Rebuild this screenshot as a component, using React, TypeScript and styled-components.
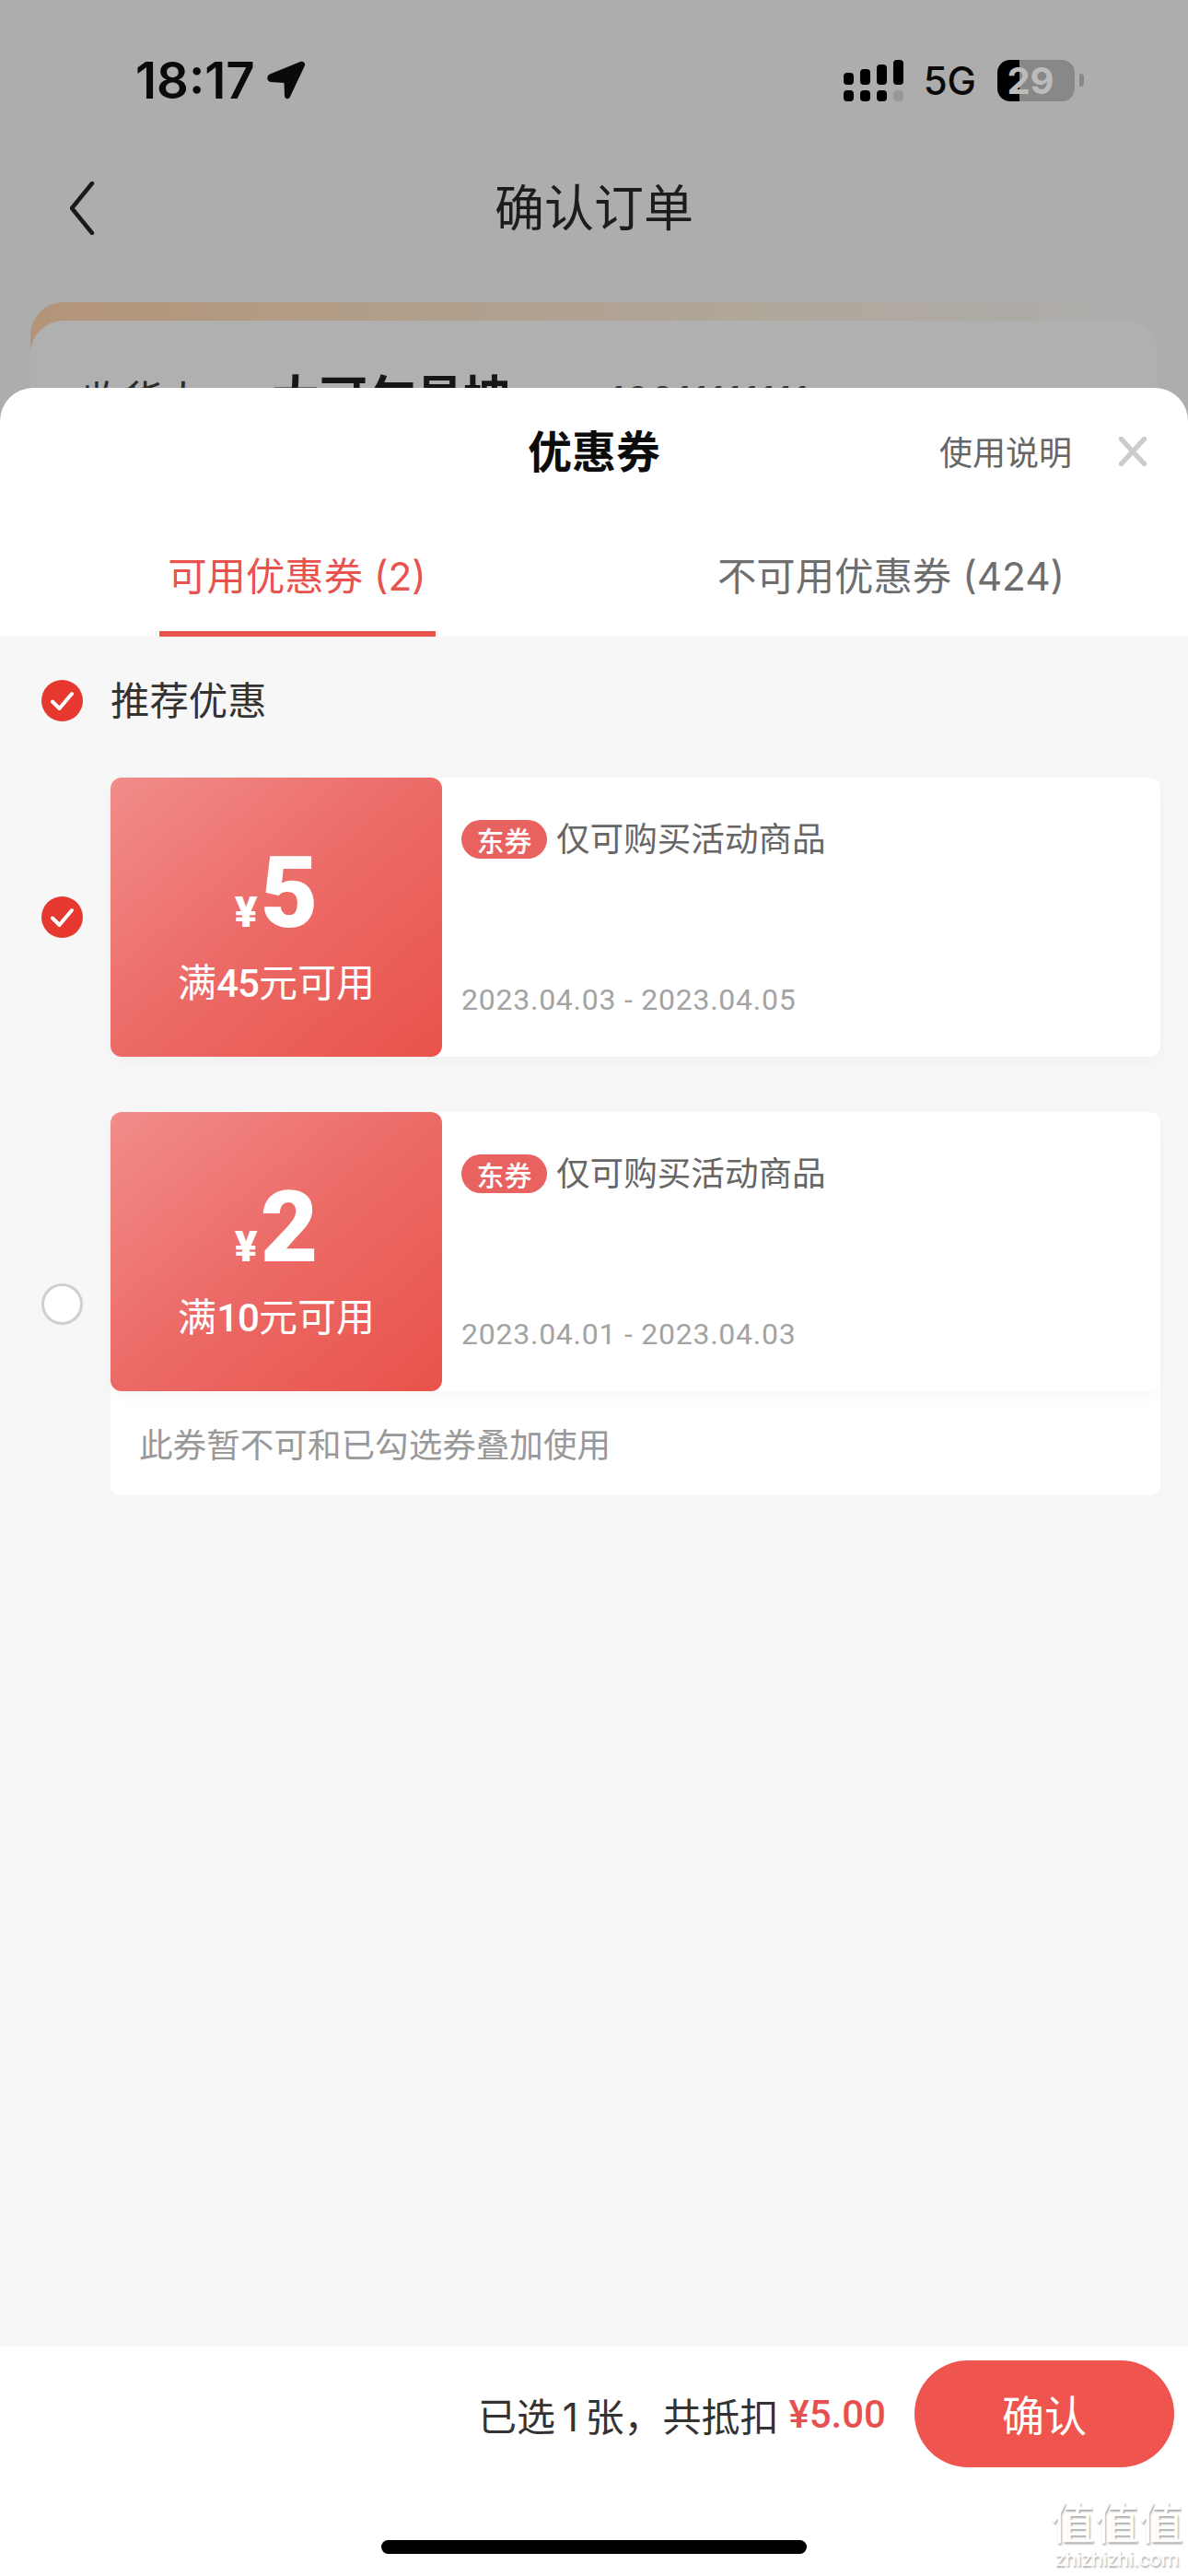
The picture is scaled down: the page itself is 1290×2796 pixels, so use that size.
import React from "react";
import styled, { createGlobalStyle } from "styled-components";

const GlobalStyle = createGlobalStyle`
  html, body {
    margin: 0;
    padding: 0;
    background: #adadad;
  }
  * {
    box-sizing: border-box;
  }
`;

const Page = styled.div`
  position: relative;
  width: 1290px;
  height: 2796px;
  display: flex;
  flex-direction: column;
  overflow: hidden;
  background: #adadad;
  font-family: Inter, "Noto Sans CJK SC", sans-serif;
`;

/* dimmed order page behind the sheet */
const Backdrop = styled.div`
  height: 421px;
  flex: none;
  overflow: hidden;
`;
const StatusBar = styled.div`
  height: 174px;
  display: flex;
  align-items: center;
  justify-content: space-between;
  padding: 0 113px 0 147px;
`;
const TimeBox = styled.div`
  display: flex;
  align-items: center;
  gap: 13px;
`;
const Time = styled.span`
  font-size: 54.5px;
  font-weight: 600;
  color: #0a0a0a;
`;
const StatusRight = styled.div`
  display: flex;
  align-items: center;
`;
const FiveG = styled.span`
  font-size: 42px;
  font-weight: 500;
  color: #0a0a0a;
  margin: 0 23px 0 22px;
`;
const Battery = styled.div`
  width: 84px;
  height: 45px;
  border-radius: 14px;
  background: linear-gradient(90deg, #000 0 29%, #888 29% 100%);
  display: flex;
  align-items: center;
  justify-content: center;
  padding-right: 12px;
  font-size: 40px;
  font-weight: 700;
  color: #bcbcbc;
`;
const BatteryCap = styled.div`
  width: 5px;
  height: 14px;
  margin-left: 5px;
  border-radius: 0 4px 4px 0;
  background: #888;
`;
const Nav = styled.div`
  height: 104px;
  display: grid;
  grid-template-columns: 1fr auto 1fr;
  align-items: center;
  padding-left: 76px;
`;
const NavTitle = styled.div`
  font-size: 54px;
  color: #1c1c1c;
  margin-left: -76px;
  padding-bottom: 7px;
`;
const AddressCard = styled.div`
  margin: 50px 33px 0;
  height: 200px;
  padding-top: 20px;
  border-radius: 36px 36px 0 0;
  background: linear-gradient(90deg, #b39478 0%, #b0a698 60%, #adadad 100%);
`;
const AddressInner = styled.div`
  height: 100%;
  padding: 52px 0 0 56px;
  display: flex;
  align-items: flex-start;
  border-radius: 36px 36px 0 0;
  background: #b0b0b0;
  color: #161616;
`;
const AddressLabel = styled.span`
  font-size: 44px;
  width: 206px;
  color: #2a2a2a;
`;
const AddressName = styled.span`
  font-size: 52px;
  font-weight: 700;
  width: 367px;
  line-height: 66px;
`;
const AddressPhone = styled.span`
  font-size: 40px;
  letter-spacing: 2px;
  color: #333;
  line-height: 68px;
`;

/* coupon sheet */
const Sheet = styled.div`
  flex: 1;
  display: flex;
  flex-direction: column;
  border-radius: 36px 36px 0 0;
  overflow: hidden;
  background: #fff;
`;
const SheetHeader = styled.div`
  height: 138px;
  flex: none;
  display: grid;
  grid-template-columns: 1fr auto 1fr;
  align-items: center;
`;
const SheetTitle = styled.div`
  font-size: 48px;
  font-weight: 700;
  color: #0c0c0c;
  padding-bottom: 6px;
`;
const SheetActions = styled.div`
  display: flex;
  align-items: center;
  justify-content: flex-end;
  gap: 51px;
  padding-right: 45px;
`;
const Help = styled.span`
  font-size: 36px;
  color: #666;
  margin-top: -2px;
`;
const Tabs = styled.div`
  height: 132px;
  flex: none;
  display: flex;
`;
const Tab = styled.div`
  flex: 1;
  display: flex;
  flex-direction: column;
  align-items: center;
`;
const TabLabel = styled.div<{ $active?: boolean }>`
  flex: 1;
  display: flex;
  align-items: center;
  font-size: 42.4px;
  color: ${(p) => (p.$active ? "#e8524f" : "#6e6e6e")};
`;
const TabLine = styled.div<{ $active?: boolean }>`
  width: 300px;
  height: 6px;
  background: ${(p) => (p.$active ? "#e8524f" : "transparent")};
`;
const Content = styled.div`
  flex: 1;
  padding: 47px 30px 0 45px;
  background: #f7f7f7;
`;
const Recommend = styled.div`
  height: 45px;
  display: flex;
  align-items: center;
  gap: 30px;
  margin-bottom: 61px;
  font-size: 42.4px;
  color: #333;
`;
const RecommendText = styled.span`
  margin-top: -6px;
`;
const CouponRow = styled.div`
  display: flex;
  align-items: center;
  gap: 30px;
  margin-bottom: 60px;
`;
const CheckOff = styled.div`
  width: 45px;
  height: 45px;
  flex: none;
  border-radius: 50%;
  background: #fff;
  border: 3px solid #cfcfcf;
`;
const CouponStack = styled.div`
  flex: 1;
  border-radius: 12px;
  background: #fff;
`;
const Coupon = styled.div`
  height: 303px;
  display: flex;
  border-radius: 12px;
  background: #fff;
  box-shadow: 0 6px 16px rgba(0, 0, 0, 0.03);
`;
const Face = styled.div`
  width: 360px;
  flex: none;
  display: flex;
  flex-direction: column;
  align-items: center;
  padding-top: 73px;
  border-radius: 12px;
  color: #fff;
  background: linear-gradient(140deg, #f18d8a 0%, #ec6a66 50%, #e9534b 100%);
`;
const Amount = styled.div`
  height: 104px;
  display: flex;
  align-items: baseline;
  gap: 3px;
  line-height: 104px;
  font-family: Roboto, sans-serif;
  font-weight: 900;
`;
const Yen = styled.span`
  font-size: 46px;
`;
const Digit = styled.span`
  font-size: 108px;
`;
const Threshold = styled.div`
  margin-top: 18px;
  font-size: 42px;
  line-height: 56px;
  b {
    font-family: Roboto, sans-serif;
    font-weight: 500;
    letter-spacing: -1px;
  }
`;
const CouponBody = styled.div`
  flex: 1;
  display: flex;
  flex-direction: column;
  justify-content: space-between;
  padding: 46px 20px 42px 21px;
`;
const CouponTitle = styled.div`
  display: flex;
  align-items: center;
  gap: 10px;
  height: 42px;
  font-size: 36.6px;
  color: #666;
`;
const CouponTitleText = styled.span`
  margin-top: -5px;
`;
const Badge = styled.span`
  width: 93px;
  height: 42px;
  display: flex;
  align-items: center;
  justify-content: center;
  border-radius: 21px;
  background: #e8625f;
  color: #fff;
  font-size: 30px;
  font-weight: 500;
`;
const DateRange = styled.div`
  font-family: Roboto, sans-serif;
  font-size: 32px;
  line-height: 40px;
  letter-spacing: 0.75px;
  color: #a3a3a3;
`;
const StackNote = styled.div`
  height: 113px;
  display: flex;
  align-items: center;
  padding: 0 0 0 31px;
  font-size: 36.6px;
  color: #999;
`;

/* bottom bar */
const Footer = styled.div`
  height: 249px;
  flex: none;
  display: flex;
  flex-direction: column;
  padding-top: 15px;
  background: #fff;
`;
const FooterRow = styled.div`
  height: 116px;
  display: flex;
  align-items: center;
  justify-content: flex-end;
  gap: 31px;
  padding-right: 15px;
`;
const Summary = styled.div`
  font-size: 42px;
  color: #333;
  display: flex;
  align-items: center;
  gap: 11px;
`;
const Price = styled.span`
  font-family: Roboto, sans-serif;
  font-weight: 500;
  color: #e8504f;
`;
const ConfirmButton = styled.button`
  width: 282px;
  height: 116px;
  padding: 0 0 3px;
  border: 0;
  border-radius: 58px;
  background: #ef544e;
  color: #fff;
  font-family: inherit;
  font-size: 46px;
`;
const HomeBar = styled.div`
  width: 462px;
  height: 15px;
  margin: 79px auto 0;
  border-radius: 8px;
  background: #000;
`;
const Watermark = styled.div`
  position: absolute;
  right: 4px;
  bottom: 6px;
  width: 146px;
  display: flex;
  flex-direction: column;
  align-items: center;
  color: #fff;
  text-shadow: 1px 2px 2px #a8a8a8;
`;
const WatermarkMark = styled.div`
  font-size: 48px;
  line-height: 54px;
`;
const WatermarkUrl = styled.div`
  font-family: Roboto, sans-serif;
  font-size: 22px;
  line-height: 24px;
`;

function CheckOn() {
  return (
    <svg width="45" height="45" viewBox="0 0 45 45" style={{ flex: "none" }}>
      <circle cx="22.5" cy="22.5" r="22.5" fill="#e6382f" />
      <path d="M12 23.5 L19.5 31 L33 15" fill="none" stroke="#fff" strokeWidth="4" strokeLinecap="round" strokeLinejoin="round" />
    </svg>
  );
}

function Signal() {
  const tops = [14, 10, 5, 0];
  return (
    <svg width="65" height="45" viewBox="0 0 65 45">
      {tops.map((t, i) => (
        <g key={i}>
          <rect x={i * 18} y={t} width="11" height={27 - t} rx="4" fill="#000" />
          <rect x={i * 18} y="33" width="11" height="12" rx="4" fill={i === 3 ? "#999" : "#000"} />
        </g>
      ))}
    </svg>
  );
}

function LocationArrow() {
  return (
    <svg width="42" height="42" viewBox="0 0 42 42">
      <path d="M3 14.5 L36 1 C39.5 -0.3 42 2.5 40.8 5.5 L25 39 C23.5 42.5 19 41.5 19 38 L18.5 24 L4 23 C-0.5 22.5 -1 16.5 3 14.5Z" fill="#0a0a0a" />
    </svg>
  );
}

function BackIcon() {
  return (
    <svg width="28" height="58" viewBox="0 0 28 58">
      <path d="M24 2 L2 29 L24 56" fill="none" stroke="#1a1a1a" strokeWidth="4.5" strokeLinecap="round" strokeLinejoin="round" />
    </svg>
  );
}

function CloseIcon() {
  return (
    <svg width="30" height="32" viewBox="0 0 30 32">
      <path d="M2.5 2.5 L27.5 29.5 M27.5 2.5 L2.5 29.5" fill="none" stroke="#ccc" strokeWidth="5.5" strokeLinecap="round" />
    </svg>
  );
}

function CouponCard({ value, threshold, range }: { value: string; threshold: string; range: string }) {
  return (
    <Coupon>
      <Face>
        <Amount>
          <Yen>¥</Yen>
          <Digit>{value}</Digit>
        </Amount>
        <Threshold>
          满<b>{threshold}</b>元可用
        </Threshold>
      </Face>
      <CouponBody>
        <CouponTitle>
          <Badge>东券</Badge>
          <CouponTitleText>仅可购买活动商品</CouponTitleText>
        </CouponTitle>
        <DateRange>{range}</DateRange>
      </CouponBody>
    </Coupon>
  );
}

export default function App() {
  return (
    <>
      <GlobalStyle />
      <Page>
        <Backdrop>
          <StatusBar>
            <TimeBox>
              <Time>18:17</Time>
              <LocationArrow />
            </TimeBox>
            <StatusRight>
              <Signal />
              <FiveG>5G</FiveG>
              <Battery>29</Battery>
              <BatteryCap />
            </StatusRight>
          </StatusBar>
          <Nav>
            <BackIcon />
            <NavTitle>确认订单</NavTitle>
          </Nav>
          <AddressCard>
            <AddressInner>
              <AddressLabel>收货人</AddressLabel>
              <AddressName>大可乍易坤</AddressName>
              <AddressPhone>18311111111</AddressPhone>
            </AddressInner>
          </AddressCard>
        </Backdrop>
        <Sheet>
          <SheetHeader>
            <div />
            <SheetTitle>优惠券</SheetTitle>
            <SheetActions>
              <Help>使用说明</Help>
              <CloseIcon />
            </SheetActions>
          </SheetHeader>
          <Tabs>
            <Tab>
              <TabLabel $active>可用优惠券 (2)</TabLabel>
              <TabLine $active />
            </Tab>
            <Tab>
              <TabLabel>不可用优惠券 (424)</TabLabel>
              <TabLine />
            </Tab>
          </Tabs>
          <Content>
            <Recommend>
              <CheckOn />
              <RecommendText>推荐优惠</RecommendText>
            </Recommend>
            <CouponRow>
              <CheckOn />
              <CouponStack>
                <CouponCard value="5" threshold="45" range="2023.04.03 - 2023.04.05" />
              </CouponStack>
            </CouponRow>
            <CouponRow>
              <CheckOff />
              <CouponStack>
                <CouponCard value="2" threshold="10" range="2023.04.01 - 2023.04.03" />
                <StackNote>此券暂不可和已勾选券叠加使用</StackNote>
              </CouponStack>
            </CouponRow>
          </Content>
          <Footer>
            <FooterRow>
              <Summary>
                已选{"\u2009"}1{"\u2009"}张，共抵扣
                <Price>¥5.00</Price>
              </Summary>
              <ConfirmButton>确认</ConfirmButton>
            </FooterRow>
            <HomeBar />
          </Footer>
        </Sheet>
        <Watermark>
          <WatermarkMark>值值值</WatermarkMark>
          <WatermarkUrl>zhizhizhi.com</WatermarkUrl>
        </Watermark>
      </Page>
    </>
  );
}
